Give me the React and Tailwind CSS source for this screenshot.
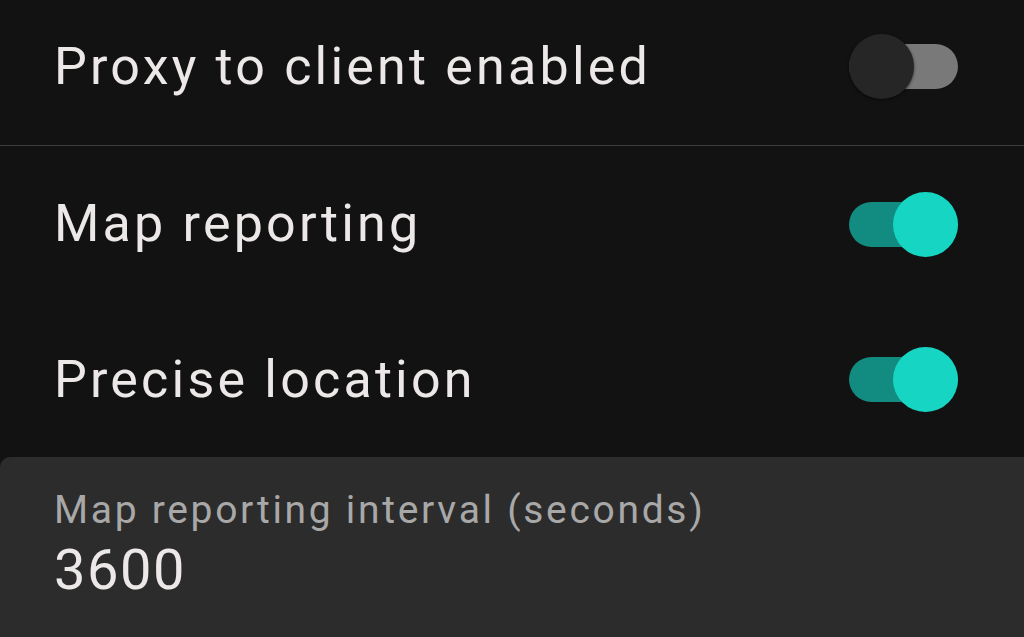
import React from 'react';

function Toggle({ on }) {
  return (
    <div className="relative w-[109px] h-[65px] flex items-center shrink-0">
      <div className={`w-full h-[45px] rounded-full ${on ? 'bg-[#128b81]' : 'bg-[#7a797a]'}`} />
      <div
        className={`absolute top-0 w-[65px] h-[65px] rounded-full ${
          on ? 'right-0 bg-[#17d5c3]' : 'left-0 bg-[#262626] shadow-[0_1px_3px_rgba(0,0,0,0.6)]'
        }`}
      />
    </div>
  );
}

function Row({ label, on, className }) {
  return (
    <div className={`flex items-center justify-between pl-[54px] pr-[66px] ${className}`}>
      <span className="text-[52px] text-[#ece8e8] tracking-[3.2px]">{label}</span>
      <Toggle on={on} />
    </div>
  );
}

export default function App() {
  return (
    <div className="w-[1024px] h-[637px] overflow-hidden bg-[#121212] flex flex-col font-['Roboto',sans-serif]">
      <Row label="Proxy to client enabled" on={false} className="h-[145px] pb-[12px]" />
      <div className="h-px bg-[#3b3b3b]" />
      <Row label="Map reporting" on className="h-[156px]" />
      <Row label="Precise location" on className="h-[155px]" />

      {/* Interval field */}
      <div className="flex-1 bg-[#2c2c2c] rounded-tl-[10px] pl-[54px] pt-[23px]">
        <div className="text-[39px] text-[#a9a8a8] tracking-[2.7px] leading-[60px]">
          Map reporting interval (seconds)
        </div>
        <div className="text-[56px] text-[#ece8e8] tracking-[1.5px] leading-[62px] -mt-[1px]">3600</div>
      </div>
    </div>
  );
}
